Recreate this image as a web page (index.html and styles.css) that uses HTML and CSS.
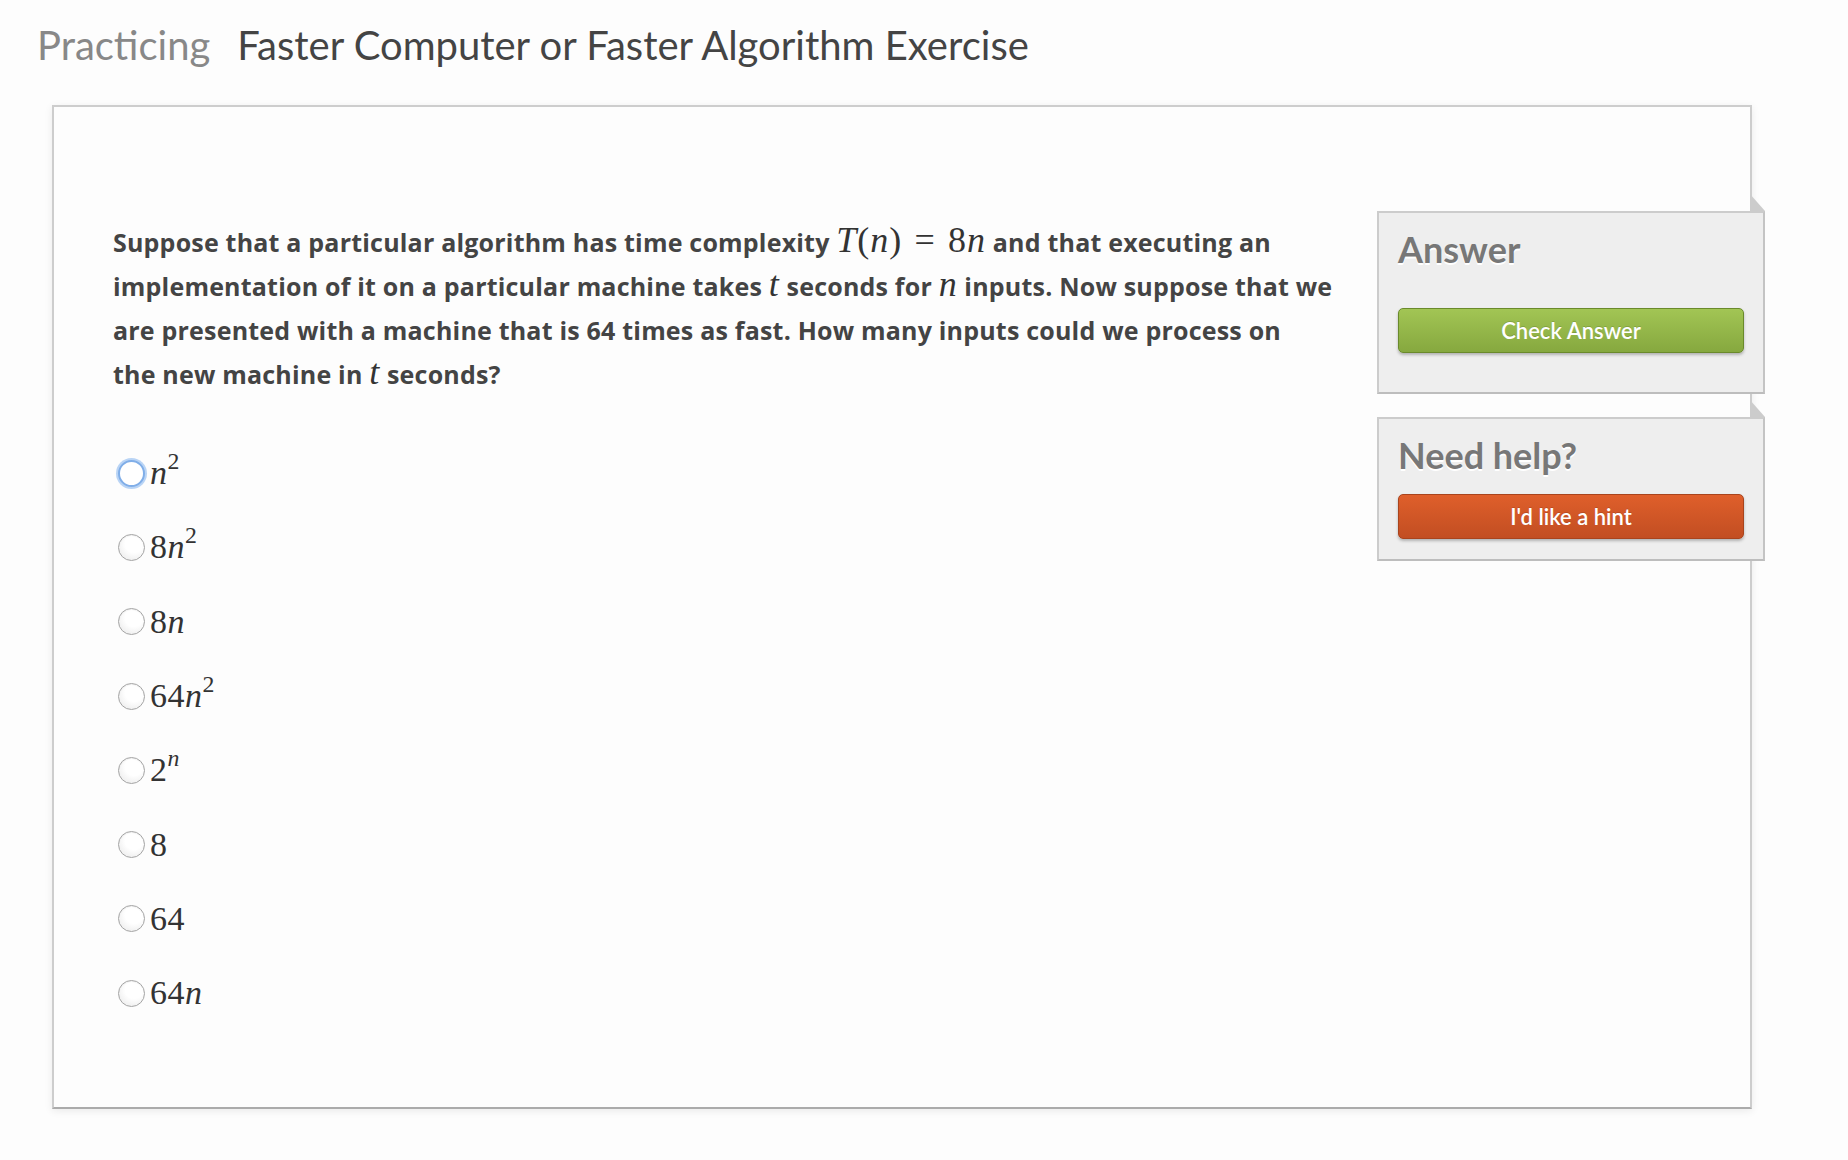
FILE: index.html
```html
<!DOCTYPE html>
<html lang="en">
<head>
<meta charset="utf-8">
<title>Faster Computer or Faster Algorithm Exercise</title>
<link rel="stylesheet" href="styles.css">
</head>
<body>
<header class="page-title">
  <span class="crumb">Practicing</span><span class="title">Faster Computer or Faster Algorithm Exercise</span>
</header>
<main class="card">
  <div class="problem">
    <p class="question">Suppose that a particular algorithm has time complexity <span class="m"><i>T</i>(<i>n</i>)<span class="rel">=</span>8<i>n</i></span> and that executing an<br>implementation of it on a particular machine takes <span class="m"><i>t</i></span> seconds for <span class="m"><i>n</i></span> inputs. Now suppose that we<br>are presented with a machine that is 64 times as fast. How many inputs could we process on<br>the new machine in <span class="m"><i>t</i></span> seconds?</p>
    <ul class="choices">
      <li><label class="choice"><input type="radio" name="ans" class="radio focused"><span class="m opt"><i>n</i><sup>2</sup></span></label></li>
      <li><label class="choice"><input type="radio" name="ans" class="radio"><span class="m opt">8<i>n</i><sup>2</sup></span></label></li>
      <li><label class="choice"><input type="radio" name="ans" class="radio"><span class="m opt">8<i>n</i></span></label></li>
      <li><label class="choice"><input type="radio" name="ans" class="radio"><span class="m opt">64<i>n</i><sup>2</sup></span></label></li>
      <li><label class="choice"><input type="radio" name="ans" class="radio"><span class="m opt">2<sup><i>n</i></sup></span></label></li>
      <li><label class="choice"><input type="radio" name="ans" class="radio"><span class="m opt">8</span></label></li>
      <li><label class="choice"><input type="radio" name="ans" class="radio"><span class="m opt">64</span></label></li>
      <li><label class="choice"><input type="radio" name="ans" class="radio"><span class="m opt">64<i>n</i></span></label></li>
    </ul>
  </div>
  <aside class="sidebar">
    <section class="panel panel-answer">
      <h2 class="panel-title">Answer</h2>
      <button class="btn btn-green" type="button">Check Answer</button>
    </section>
    <section class="panel panel-help">
      <h2 class="panel-title">Need help?</h2>
      <button class="btn btn-orange" type="button">I'd like a hint</button>
    </section>
  </aside>
</main>
</body>
</html>
```
FILE: styles.css
```css
html, body {
  margin: 0;
  padding: 0;
}
body {
  background: #fdfdfd;
  font-family: Lato, "Open Sans", sans-serif;
  color: #444;
  width: 1848px;
  min-height: 1160px;
}
.page-title {
  box-sizing: border-box;
  height: 105px;
  margin: 0;
  padding: 21px 0 0 37px;
  font-size: 40px;
  line-height: 48px;
  font-weight: 400;
  white-space: nowrap;
}
.crumb {
  color: #888;
  margin-right: 27px;
}
.title {
  color: #444;
}
.card {
  box-sizing: border-box;
  margin-left: 52px;
  width: 1700px;
  height: 1004px;
  border: 2px solid #cdcdcd;
  border-bottom-color: #ababab;
  background: #fdfdfd;
  box-shadow: 0 2px 8px rgba(0, 0, 0, 0.08);
  display: flex;
  align-items: flex-start;
}
.problem {
  flex: 1;
  padding: 113px 0 0 59px;
}
.question {
  margin: 0;
  max-width: 1280px;
  font-family: "Open Sans", Lato, sans-serif;
  font-size: 25px;
  line-height: 44px;
  font-weight: 700;
  letter-spacing: 0.2px;
  color: #444;
  white-space: nowrap;
}
.m {
  font-family: "Liberation Serif", "Times New Roman", serif;
  font-weight: 400;
  font-size: 36px;
  line-height: 0;
  letter-spacing: 1px;
  color: #333;
}
.m i {
  font-style: italic;
}
.rel {
  margin: 0 0.34em;
}
.choices {
  list-style: none;
  margin: 40px 0 0;
  padding: 0;
}
.choices li {
  height: 74.3px;
  display: flex;
  align-items: center;
}
.choice {
  display: flex;
  align-items: center;
}
.radio {
  appearance: none;
  -webkit-appearance: none;
  box-sizing: border-box;
  width: 27px;
  height: 27px;
  margin: 0 5px 0 5px;
  border-radius: 50%;
  border: 1px solid #a4a4a4;
  background: radial-gradient(circle at 60% 35%, #ffffff 40%, #e6e6e6 100%);
  box-shadow: inset 0 1px 1px rgba(0, 0, 0, 0.06);
}
.radio.focused {
  border: 2px solid #80aee8;
  background: #fff;
  box-shadow: 0 0 0 2px rgba(140, 185, 240, 0.6);
}
.opt {
  font-size: 34px;
  line-height: 40px;
  letter-spacing: 0.5px;
  color: #333;
}
.opt sup {
  font-size: 0.7em;
  line-height: 0;
  vertical-align: 0.62em;
}
.sidebar {
  flex: none;
  width: 388px;
  margin: 104px -15px 0 0;
  display: flex;
  flex-direction: column;
  gap: 23px;
}
.panel {
  position: relative;
  box-sizing: border-box;
  background: #eeeeee;
  border: 2px solid #cccccc;
  border-right-color: #c4c4c4;
  border-bottom-color: #bdbdbd;
  padding: 16px 19px 20px;
}
.panel::before {
  content: "";
  position: absolute;
  top: -19px;
  right: -2px;
  width: 15px;
  height: 17px;
  background: #cccccc;
  clip-path: polygon(0 0, 0 100%, 100% 100%);
}
.panel-answer {
  height: 183px;
}
.panel-help {
  height: 144px;
}
.panel-title {
  margin: 0;
  font-size: 36px;
  line-height: 40px;
  font-weight: 700;
  color: #777;
  text-shadow: 0 2px 0 #fff;
}
.panel-answer .btn {
  margin-top: 39px;
}
.panel-help .btn {
  margin-top: 19px;
}
.btn {
  display: block;
  box-sizing: border-box;
  width: 100%;
  height: 45px;
  border-radius: 5px;
  border: 1px solid;
  font-family: Lato, "Open Sans", sans-serif;
  font-size: 22px;
  font-weight: 600;
  color: #fff;
  text-shadow: 0 -1px 0 rgba(0, 0, 0, 0.15);
  box-shadow: 0 2px 3px rgba(0, 0, 0, 0.25);
  cursor: pointer;
  padding: 0;
}
.btn-green {
  background: linear-gradient(#a2c554, #86a83f);
  border-color: #6a8a2b;
}
.btn-orange {
  background: linear-gradient(#df5f2b, #c24e22);
  border-color: #a9441d;
}
```
